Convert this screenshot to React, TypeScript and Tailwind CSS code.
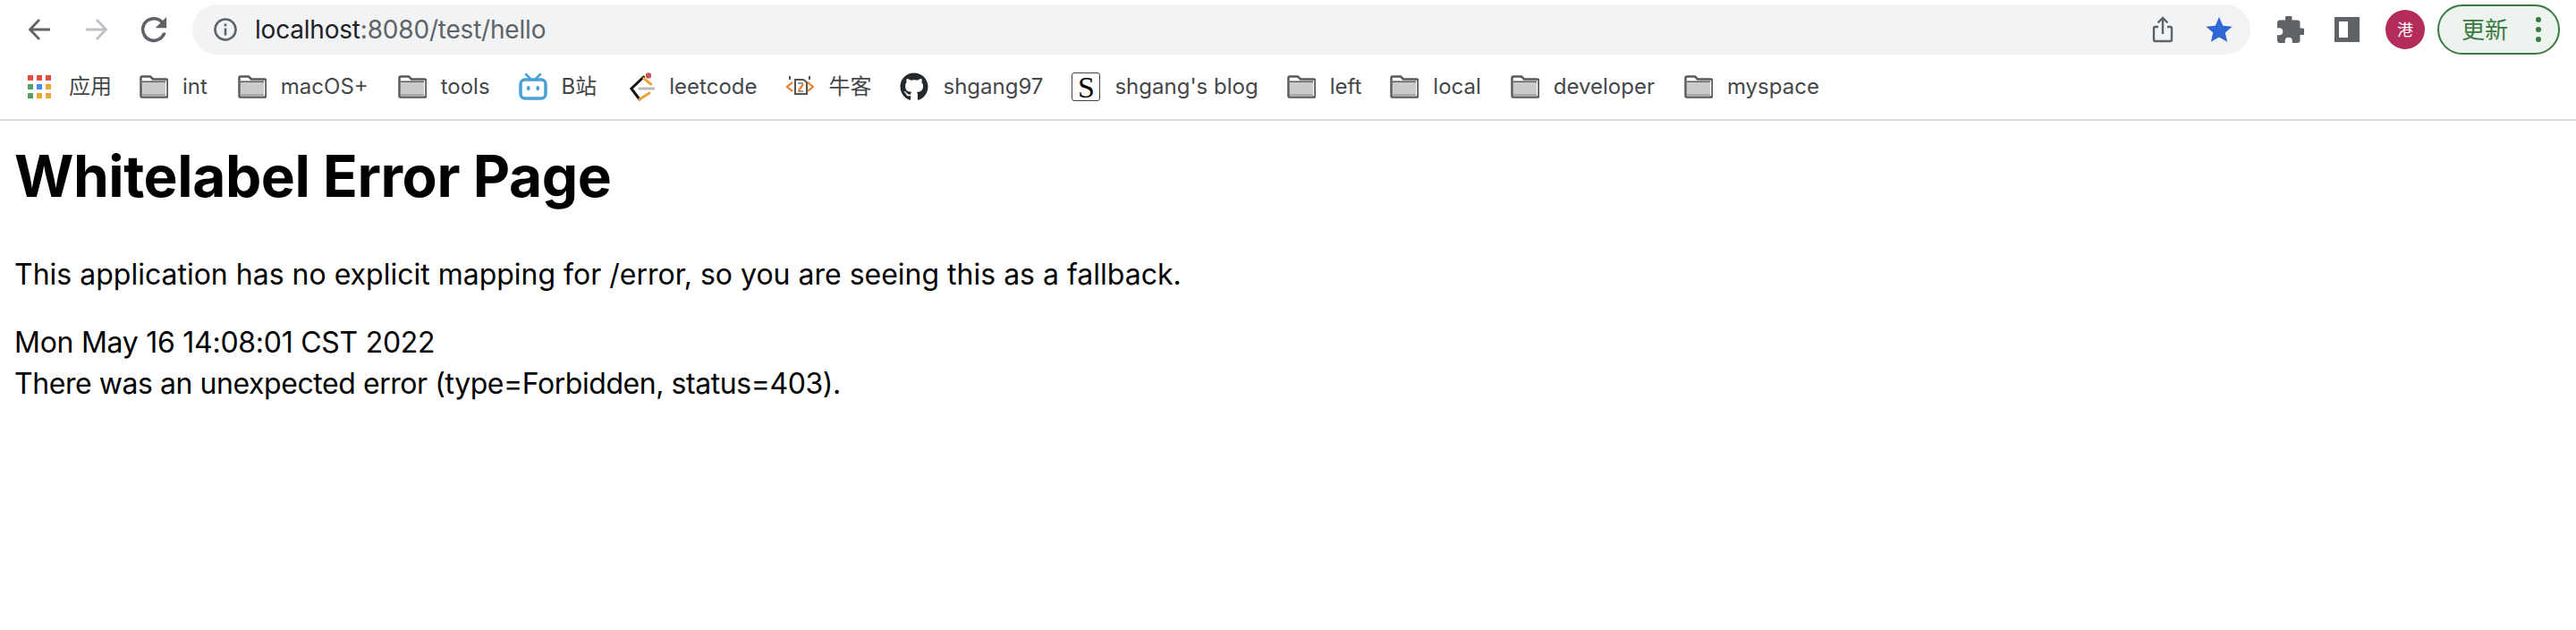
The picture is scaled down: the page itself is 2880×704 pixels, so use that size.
import React from 'react';
import {FaGithub} from 'react-icons/fa';

const FolderIcon: React.FC = () => (
  <svg width="32" height="26" viewBox="0 0 32 26" className="shrink-0">
    <path d="M1.500 3q0-1.500 1.500-1.500h9l3 3h14q2.500 0 2.500 1.500v17.500q0 1-1 1H2.500q-1 0-1-1z" fill="#fff" stroke="#5a5a5a" strokeWidth="2.500"/>
    <rect x="3" y="8" width="26" height="13" fill="#cbcbcb"/>
    <rect x="3" y="21" width="26" height="3" fill="#a9a9a9"/>
    <rect x="3" y="6.500" width="26" height="1.500" fill="#5a5a5a"/>
  </svg>
);

const AppsIcon: React.FC = () => {
  const colors = ['#e34c3f', '#e34c3f', '#e34c3f', '#55a064', '#4a8af0', '#e8a737', '#55a064', '#e8a737', '#e8a737'];
  return (
    <div className="grid grid-cols-[repeat(3,6px)] gap-x-[4px] gap-y-[4px] w-[26px] shrink-0">
      {colors.map((c, i) => (
        <span key={i} className="h-[6px] w-[6px]" style={{backgroundColor: c}}/>
      ))}
    </div>
  );
};

const BiliIcon: React.FC = () => (
  <svg width="32" height="30" viewBox="0 0 32 30" className="shrink-0">
    <path d="M8 1l5 5M24 1l-5 5" stroke="#47a1d8" strokeWidth="2.500" strokeLinecap="round"/>
    <rect x="2" y="7" width="28" height="21" rx="5" fill="#fff" stroke="#47a1d8" strokeWidth="3.500"/>
    <rect x="9" y="14" width="3.500" height="5" rx="1.500" fill="#47a1d8"/>
    <rect x="19.500" y="14" width="3.500" height="5" rx="1.500" fill="#47a1d8"/>
  </svg>
);

const LeetcodeIcon: React.FC = () => (
  <svg width="28" height="32" viewBox="0 0 28 32" className="shrink-0">
    <path d="M15.600 5L1.800 18 11 30" fill="none" stroke="#111" strokeWidth="3" strokeLinecap="round"/>
    <path d="M15.600 6.600l8 6.400M11 30l11-7" fill="none" stroke="#e8a53c" strokeWidth="3" strokeLinecap="round"/>
    <path d="M11 18h16" stroke="#b9b9b9" strokeWidth="3" strokeLinecap="round"/>
    <circle cx="21" cy="3.500" r="3.200" fill="#c9575a"/>
  </svg>
);

const NowcoderIcon: React.FC = () => (
  <svg width="32" height="30" viewBox="0 0 32 30" className="shrink-0">
    <path d="M11 7h9l4 3v13H11z" fill="none" stroke="#555" strokeWidth="2"/>
    <path d="M14 11h6M14 20h6" stroke="#777" strokeWidth="1.500"/>
    <path d="M8 10l-6 5 6 5M25 10l6 5-6 5M20 12l-5 7" fill="none" stroke="#ec7d22" strokeWidth="2.200"/>
    <path d="M5 3v4M27 3v4" stroke="#555" strokeWidth="2"/>
  </svg>
);

const Bookmark: React.FC<{icon: React.ReactNode; label: string; className?: string}> = ({icon, label, className}) => (
  <div className={`flex items-center gap-4 ${className || ''}`}>
    {icon}
    <span className="whitespace-nowrap">{label}</span>
  </div>
);

export default function App() {
  return (
    <div className="min-h-[704px] bg-white font-['Inter','Noto_Sans_CJK_SC',sans-serif] text-black">
      <nav className="h-[135px] border-b-2 border-[#dadce0]">
        <div className="flex items-center h-[70px] pb-[4px] pl-[31px]">
          <svg width="26" height="26" viewBox="0 0 26 26" className="shrink-0">
            <path d="M25 13H3M13 2L2.500 13 13 24" fill="none" stroke="#5f6368" strokeWidth="2.800"/>
          </svg>
          <svg width="26" height="26" viewBox="0 0 26 26" className="ml-[38px] shrink-0">
            <path d="M1 13h22M13 2l10.500 11L13 24" fill="none" stroke="#bdc1c6" strokeWidth="2.800"/>
          </svg>
          <svg width="30" height="30" viewBox="3.500 3.500 17 17" className="ml-[36px] shrink-0">
            <path d="M17.650 6.350A7.960 7.960 0 0 0 12 4a8 8 0 1 0 7.730 10h-2.080A6 6 0 1 1 12 6c1.660 0 3.140.690 4.220 1.780L13 11h7V4z" fill="#5f6368"/>
          </svg>
          <div className="flex items-center ml-[28px] w-[2301px] h-[56px] rounded-full bg-[#f1f3f4] pl-[23px] pr-[20px]">
            <svg width="28" height="28" viewBox="0 0 28 28" className="shrink-0">
              <circle cx="14" cy="14" r="11.500" fill="none" stroke="#5f6368" strokeWidth="2.600"/>
              <rect x="12.700" y="12.500" width="2.600" height="8" fill="#5f6368"/>
              <rect x="12.700" y="7.500" width="2.600" height="2.800" fill="#5f6368"/>
            </svg>
            <span className="ml-[19px] text-[28px] tracking-[-0.2px] text-[#202124]">localhost<span className="text-[#5f6368]">:8080/test/hello</span></span>
            <svg width="24" height="30" viewBox="0 0 24 30" className="ml-auto shrink-0">
              <path d="M7 12H3.500Q2 12 2 13.500V26.500Q2 28 3.500 28H20.500Q22 28 22 26.500V13.500Q22 12 20.500 12H17M12 20V2.500M6.500 7.500L12 2l5.500 5.500" fill="none" stroke="#5f6368" strokeWidth="2.400"/>
            </svg>
            <svg width="30" height="30" viewBox="0 0 24 24" className="ml-[36px] shrink-0">
              <path d="M12 .8l3.400 7.700 8.300.800-6.300 5.500 1.900 8.200L12 18.700l-7.300 4.300 1.900-8.200L.3 9.300l8.300-.800z" fill="#2f67d6"/>
            </svg>
          </div>
          <svg width="30" height="30" viewBox="2 2 20 20" className="ml-[30px] shrink-0">
            <path d="M20.500 11H19V7a2 2 0 0 0-2-2h-4V3.500a2.500 2.500 0 0 0-5 0V5H4a2 2 0 0 0-2 2v3.800h1.500a2.700 2.700 0 0 1 0 5.400H2V20a2 2 0 0 0 2 2h3.800v-1.500a2.700 2.700 0 0 1 5.400 0V22H17a2 2 0 0 0 2-2v-4h1.500a2.500 2.500 0 0 0 0-5z" fill="#5f6368"/>
          </svg>
          <div className="ml-[34px] flex h-[28px] w-[28px] shrink-0 border-[5px] border-[#5f6368] border-r-[13px] bg-white"/>
          <div className="ml-[29px] flex h-[44px] w-[44px] shrink-0 items-center justify-center rounded-full bg-[#b32c5b] text-[18px] text-white">港</div>
          <div className="ml-[14px] flex h-[56px] w-[137px] shrink-0 items-center rounded-full border-2 border-[#3a7a41] bg-[#edf3ee] pl-[25px] text-[26px] text-[#3a7a41]">
            更新
            <div className="ml-[31px] flex flex-col gap-[5px]">
              <span className="h-[6px] w-[6px] rounded-full bg-[#3a7a41]"/>
              <span className="h-[6px] w-[6px] rounded-full bg-[#3a7a41]"/>
              <span className="h-[6px] w-[6px] rounded-full bg-[#3a7a41]"/>
            </div>
          </div>
        </div>
        <div className="flex items-center h-[63px] pb-[9px] pl-[31px] text-[24px] text-[#45474a]">
          <Bookmark icon={<AppsIcon/>} label="应用" className="gap-[20px] mr-[31px]"/>
          <Bookmark icon={<FolderIcon/>} label="int" className="mr-[34px]"/>
          <Bookmark icon={<FolderIcon/>} label="macOS+" className="mr-[33px]"/>
          <Bookmark icon={<FolderIcon/>} label="tools" className="mr-[32px]"/>
          <Bookmark icon={<BiliIcon/>} label="B站" className="mr-[37px]"/>
          <Bookmark icon={<LeetcodeIcon/>} label="leetcode" className="mr-[32px]"/>
          <Bookmark icon={<NowcoderIcon/>} label="牛客" className="mr-[32px]"/>
          <Bookmark icon={<FaGithub className="h-[32px] w-[32px] shrink-0 text-[#24292e]"/>} label="shgang97" className="mr-[32px]"/>
          <Bookmark icon={<div className="flex h-[32px] w-[32px] shrink-0 items-center justify-center rounded-[3px] border-[1.5px] border-[#444] font-['Liberation_Serif',serif] text-[34px] text-black">S</div>} label="shgang's blog" className="mr-[32px]"/>
          <Bookmark icon={<FolderIcon/>} label="left" className="mr-[32px]"/>
          <Bookmark icon={<FolderIcon/>} label="local" className="mr-[33px]"/>
          <Bookmark icon={<FolderIcon/>} label="developer" className="mr-[33px]"/>
          <Bookmark icon={<FolderIcon/>} label="myspace"/>
        </div>
      </nav>
      <main className="pl-[16px]">
        <h1 className="pt-[23px] text-[64px] font-bold leading-[78px] tracking-[-0.45px]">Whitelabel Error Page</h1>
        <p className="mt-[49px] text-[32px] leading-[44px]">This application has no explicit mapping for /error, so you are seeing this as a fallback.</p>
        <p className="mt-[32px] text-[32px] leading-[44px] tracking-[-0.27px]">Mon May 16 14:08:01 CST 2022</p>
        <p className="mt-[2px] text-[32px] leading-[44px] tracking-[-0.44px]">There was an unexpected error (type=Forbidden, status=403).</p>
      </main>
    </div>
  );
}
